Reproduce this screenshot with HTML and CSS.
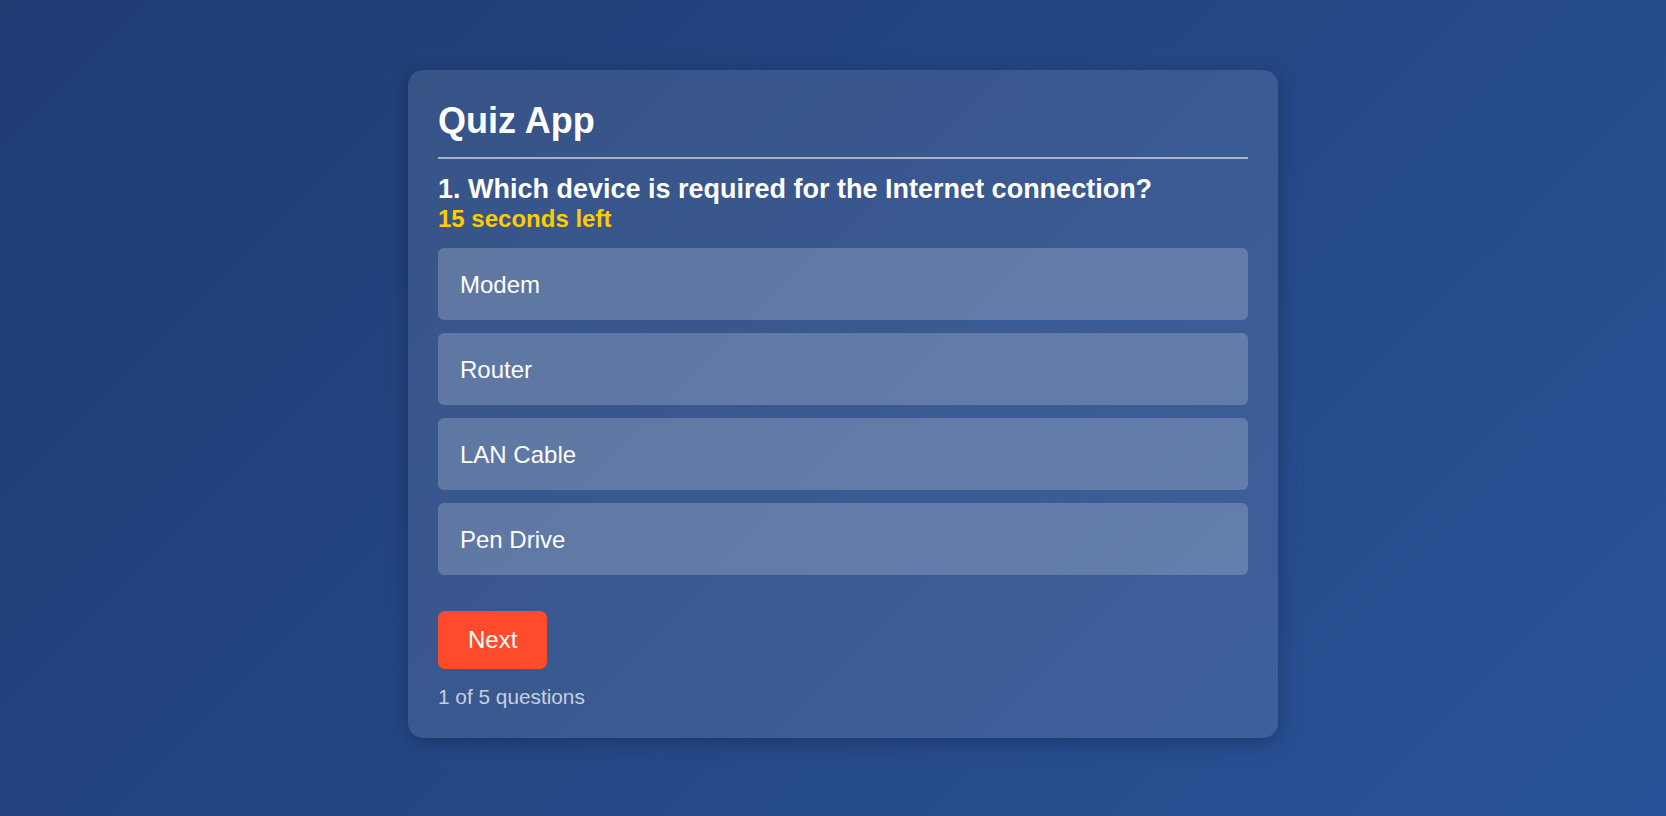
FILE: index.html
```html
<!DOCTYPE html>
<html lang="en">
<head>
<meta charset="UTF-8">
<title>Quiz App</title>
<link rel="stylesheet" href="styles.css">
</head>
<body>
<div class="page">
  <div class="quiz-card">
    <h1 class="quiz-title">Quiz App</h1>
    <div class="question-block">
      <h2 class="question">1. Which device is required for the Internet connection?</h2>
      <div class="timer">15 seconds left</div>
    </div>
    <div class="options">
      <button class="option">Modem</button>
      <button class="option">Router</button>
      <button class="option">LAN Cable</button>
      <button class="option">Pen Drive</button>
    </div>
    <button class="next-btn">Next</button>
    <div class="progress">1 of 5 questions</div>
  </div>
</div>
</body>
</html>
```

FILE: styles.css
```css
html, body {
  margin: 0;
  padding: 0;
  height: 100%;
}

body {
  font-family: "Liberation Sans", Arial, sans-serif;
  background: linear-gradient(135deg, #1e3c72, #2a5298);
  color: #fff;
  overflow: hidden;
}

.page {
  display: flex;
  justify-content: center;
  align-items: flex-start;
  padding: 70px 0 0 20px;
  box-sizing: border-box;
  min-height: 100%;
}

.quiz-card {
  width: 870px;
  box-sizing: border-box;
  padding: 30px;
  background: rgba(255, 255, 255, 0.1);
  border-radius: 15px;
  box-shadow: 0 4px 20px rgba(0, 0, 0, 0.25);
  display: flex;
  flex-direction: column;
  align-items: flex-start;
}

.quiz-title {
  margin: 0;
  width: 100%;
  font-size: 36px;
  font-weight: bold;
  padding-bottom: 15px;
  border-bottom: 2px solid rgba(255, 255, 255, 0.55);
}

.question-block {
  margin-top: 15px;
}

.question {
  margin: 0;
  font-size: 27px;
  font-weight: bold;
}

.timer {
  font-size: 24px;
  font-weight: bold;
  color: #ffcc00;
}

.options {
  width: 100%;
  margin-top: 15px;
  display: flex;
  flex-direction: column;
  gap: 13px;
}

.option {
  display: block;
  width: 100%;
  text-align: left;
  font-family: inherit;
  font-size: 24px;
  line-height: 28px;
  color: #fff;
  background: rgba(255, 255, 255, 0.2);
  border: none;
  border-radius: 6px;
  padding: 23px 22px 21px;
  cursor: pointer;
}

.next-btn {
  margin-top: 36px;
  font-family: inherit;
  font-size: 24px;
  line-height: 28px;
  color: #fff;
  background: #ff4b2b;
  border: none;
  border-radius: 7px;
  padding: 15px 30px;
  cursor: pointer;
}

.progress {
  margin-top: 16px;
  font-size: 20.8px;
  line-height: 23px;
  color: rgba(255, 255, 255, 0.72);
}
```
